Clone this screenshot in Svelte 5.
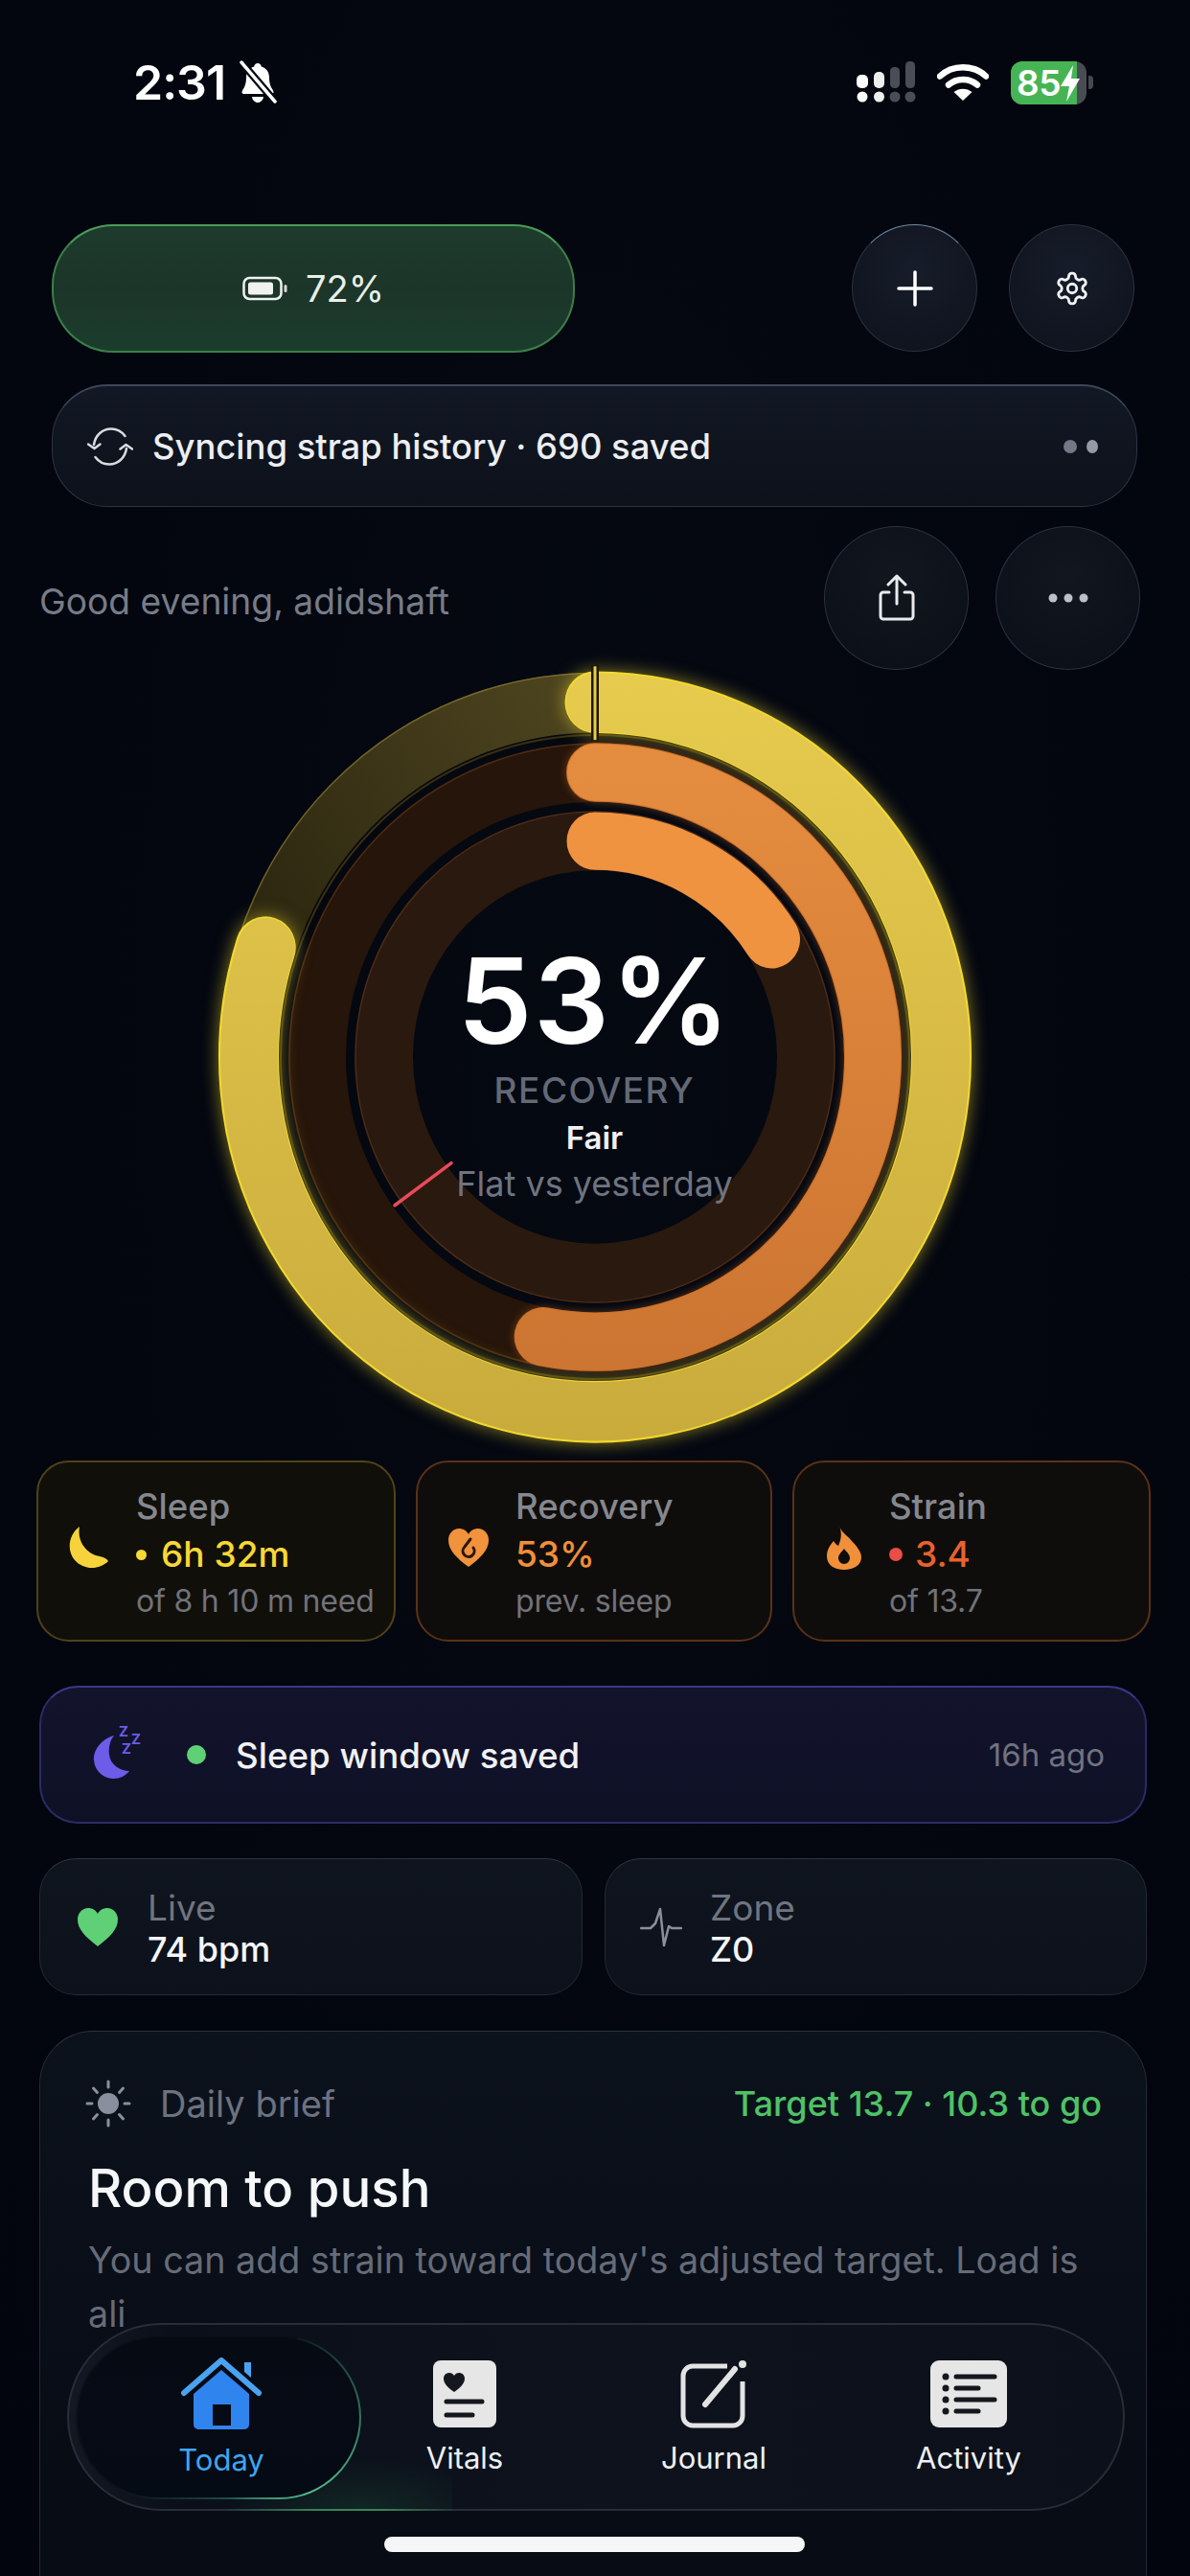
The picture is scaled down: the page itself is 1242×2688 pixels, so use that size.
<script>
  function arc(r, deg) {
    const a = (deg * Math.PI) / 180;
    const x = (r * Math.sin(a)).toFixed(2);
    const y = (-r * Math.cos(a)).toFixed(2);
    return `M 0 ${-r} A ${r} ${r} 0 ${deg > 180 ? 1 : 0} 1 ${x} ${y}`;
  }
  const cards = [
    { k: 'sleep', label: 'Sleep', value: '6h 32m', sub: 'of 8 h 10 m need', dot: true },
    { k: 'recovery', label: 'Recovery', value: '53%', sub: 'prev. sleep', dot: false },
    { k: 'strain', label: 'Strain', value: '3.4', sub: 'of 13.7', dot: true }
  ];
</script>

<div class="page">
  <header class="status">
    <div class="status-left">
      <span class="time">2:31</span>
      <svg class="bell" viewBox="0 0 40 46" width="42" height="46">
        <path d="M20 3c2 0 3.500 1.500 3.800 3.400C29.500 8 32 12.500 32 18c0 6 1.500 9.500 3.500 12.500 1.500 2.300 1.500 4.500-1.500 4.500H6c-3 0-3-2.200-1.500-4.500C6.500 27.500 8 24 8 18c0-5.500 2.500-10 8.200-11.600C16.500 4.500 18 3 20 3z" fill="#fff"/>
        <path d="M14 38h12c-.5 3.500-3 6-6 6s-5.500-2.500-6-6z" fill="#fff"/>
        <path d="M3 2 38 43" stroke="#03070f" stroke-width="8"/>
        <path d="M3 2 38 43" stroke="#fff" stroke-width="3.500" stroke-linecap="round"/>
      </svg>
    </div>
    <div class="status-right">
      <svg width="62" height="44" viewBox="0 0 62 44">
        <rect x="0" y="14" width="12" height="14" rx="5" fill="#fff"/>
        <rect x="18" y="11" width="11" height="17" rx="5" fill="#eee"/>
        <rect x="35" y="6" width="10" height="22" rx="4.500" fill="#4a4d55"/>
        <rect x="51" y="0" width="10" height="28" rx="4.500" fill="#4a4d55"/>
        <circle cx="6" cy="37" r="5.500" fill="#fff"/>
        <circle cx="23.500" cy="37" r="5.500" fill="#eee"/>
        <circle cx="40" cy="37" r="5.500" fill="#4a4d55"/>
        <circle cx="56" cy="37" r="5.500" fill="#4a4d55"/>
      </svg>
      <svg class="wifi" width="54" height="40" viewBox="0 0 54 40">
        <path d="M3 13.500C16 1 38 1 51 13.500" fill="none" stroke="#fff" stroke-width="6.500" stroke-linecap="round"/>
        <path d="M12 22.500c8.500-7.500 21.500-7.500 30 0" fill="none" stroke="#fff" stroke-width="6.500" stroke-linecap="round"/>
        <path d="M27 39 17.500 30c5.500-4.500 13.500-4.500 19 0z" fill="#fff"/>
      </svg>
      <div class="battery">
        <div class="batt-body">
          <span class="batt-fill"><span class="batt-num">85</span></span>
          <svg class="bolt" width="26" height="40" viewBox="0 0 26 40"><path d="M16 1 3 23h9L9 39l14-24h-9z" fill="#fff"/></svg>
        </div>
        <span class="batt-nub"></span>
      </div>
    </div>
  </header>

  <section class="top-row">
    <div class="battery-pill">
      <svg width="48" height="26" viewBox="0 0 48 26">
        <rect x="1.500" y="2" width="39" height="22" rx="6" fill="none" stroke="#f0f2f0" stroke-width="2.500"/>
        <rect x="6" y="6.500" width="26" height="13" rx="2.500" fill="#f0f2f0"/>
        <rect x="43.500" y="9" width="3" height="8" rx="1.500" fill="#d5d8d5"/>
      </svg>
      <span>72%</span>
    </div>
    <div class="top-actions">
      <button class="round r130 lit" aria-label="Add">
        <svg width="38" height="38" viewBox="0 0 38 38"><path d="M19 2v34M2 19h34" stroke="#fff" stroke-width="3.500" stroke-linecap="round"/></svg>
      </button>
      <button class="round r130" aria-label="Settings">
        <svg width="38" height="38" viewBox="0 0 24 24" fill="none" stroke="#f2f3f5" stroke-width="1.800" stroke-linejoin="round"><path d="M12.220 2h-.44a2 2 0 0 0-2 2v.18a2 2 0 0 1-1 1.730l-.43.25a2 2 0 0 1-2 0l-.15-.08a2 2 0 0 0-2.730.73l-.22.38a2 2 0 0 0 .73 2.730l.15.1a2 2 0 0 1 1 1.720v.51a2 2 0 0 1-1 1.740l-.15.09a2 2 0 0 0-.73 2.730l.22.38a2 2 0 0 0 2.730.73l.15-.08a2 2 0 0 1 2 0l.43.25a2 2 0 0 1 1 1.730V20a2 2 0 0 0 2 2h.44a2 2 0 0 0 2-2v-.18a2 2 0 0 1 1-1.730l.43-.25a2 2 0 0 1 2 0l.15.08a2 2 0 0 0 2.730-.73l.22-.39a2 2 0 0 0-.73-2.730l-.15-.08a2 2 0 0 1-1-1.740v-.5a2 2 0 0 1 1-1.740l.15-.09a2 2 0 0 0 .73-2.730l-.22-.38a2 2 0 0 0-2.730-.73l-.15.08a2 2 0 0 1-2 0l-.43-.25a2 2 0 0 1-1-1.730V4a2 2 0 0 0-2-2z"/><circle cx="12" cy="12" r="3"/></svg>
      </button>
    </div>
  </section>

  <section class="sync">
    <svg width="48" height="42" viewBox="0 0 48 42" fill="none" stroke="#d8dbe0" stroke-width="2.500" stroke-linecap="round" stroke-linejoin="round">
      <path d="M7 19C8.500 9 16 2.500 25 2.500c6 0 11 2.800 14.500 7.500"/>
      <path d="M41 23c-1.500 10-9 16.500-18 16.500-6 0-11-2.800-14.500-7.500"/>
      <path d="M1 18.500l6.500 4.500 6-4.500M47 23.500 40.500 19l-6 4.500"/>
    </svg>
    <span class="sync-text">Syncing strap history · 690 saved</span>
    <span class="sync-dots"><i></i><i class="b"></i></span>
  </section>

  <section class="greet">
    <span class="greet-text">Good evening, adidshaft</span>
    <div class="greet-actions">
      <button class="round r150" aria-label="Share">
        <svg width="40" height="50" viewBox="0 0 40 50" fill="none" stroke="#e9ebef" stroke-width="3" stroke-linecap="round" stroke-linejoin="round"><path d="M12 19H6a3 3 0 0 0-3 3v22a3 3 0 0 0 3 3h28a3 3 0 0 0 3-3V22a3 3 0 0 0-3-3h-6"/><path d="M20 31V3M11 11l9-9 9 9"/></svg>
      </button>
      <button class="round r150" aria-label="More">
        <svg width="42" height="10" viewBox="0 0 42 10"><circle cx="5" cy="5" r="4.500" fill="#bcc0c8"/><circle cx="21" cy="5" r="4.500" fill="#bcc0c8"/><circle cx="37" cy="5" r="4.500" fill="#bcc0c8"/></svg>
      </button>
    </div>
  </section>

  <section class="ring">
    <svg class="ring-svg" viewBox="-410 -410 820 820" preserveAspectRatio="none">
      <defs>
        <linearGradient id="gy" gradientUnits="userSpaceOnUse" x1="0" y1="-392" x2="0" y2="392"><stop offset="0" stop-color="#e6cb4e"/><stop offset="1" stop-color="#c9ab3c"/></linearGradient>
        <linearGradient id="go" gradientUnits="userSpaceOnUse" x1="0" y1="-320" x2="0" y2="320"><stop offset="0" stop-color="#e58d3f"/><stop offset="1" stop-color="#cc7532"/></linearGradient>
        <linearGradient id="ty" gradientUnits="userSpaceOnUse" x1="200" y1="-392" x2="-300" y2="-60"><stop offset="0" stop-color="#5d5226"/><stop offset="1" stop-color="#2c2710"/></linearGradient>
      </defs>
      <circle r="361" fill="none" stroke="url(#ty)" stroke-width="61"/>
      <circle r="391" fill="none" stroke="#8c7a30" stroke-width="1.500" opacity=".7"/>
      <circle r="328" fill="none" stroke="#3a300e" stroke-width="2"/>
      <circle r="290" fill="none" stroke="#26150a" stroke-width="60"/>
      <circle r="319" fill="none" stroke="#4d2a10" stroke-width="1.500"/>
      <circle r="220" fill="none" stroke="#2a190e" stroke-width="60"/>
      <circle r="250" fill="none" stroke="#4d2b16" stroke-width="1.500"/>
      <path class="glow-y" d={arc(361.500, 288)} fill="none" stroke="#f2d92f" stroke-width="63" stroke-linecap="round"/>
      <path d={arc(361, 288)} fill="none" stroke="url(#gy)" stroke-width="60" stroke-linecap="round"/>
      <path class="glow-o" d={arc(290, 190.800)} fill="none" stroke="#cf6f27" stroke-width="60" stroke-linecap="round"/>
      <path d={arc(290, 190.800)} fill="none" stroke="url(#go)" stroke-width="58" stroke-linecap="round"/>
      <path d={arc(220, 57)} fill="none" stroke="#f09341" stroke-width="59" stroke-linecap="round"/>
      <path d="M 0 -399 V -322" stroke="#1c1704" stroke-width="8"/>
      <path d="M 0 -398 V -323" stroke="#e8cc45" stroke-width="3"/>
      <path d="M -209 151 L -150 108" stroke="#ea4a5c" stroke-width="3.500" stroke-linecap="round"/>
    </svg>
    <div class="ring-text">
      <div class="pct">53%</div>
      <div class="rec">RECOVERY</div>
      <div class="fair">Fair</div>
      <div class="flat">Flat vs yesterday</div>
    </div>
  </section>

  <section class="cards">
    {#each cards as c}
      <article class="card {c.k}">
        <span class="card-icon">
          {#if c.k === 'sleep'}
            <svg width="44" height="46" viewBox="0 0 44 46"><path d="M13 1C2 9-1 25 8 36c9 10 25 11 35 1-2-3-5-4-9-5C22 30 10 18 13 1z" fill="#f6d33c"/></svg>
          {:else if c.k === 'recovery'}
            <svg width="44" height="42" viewBox="0 0 44 42"><path d="M22 41C10 32 1 24 1 13 1 6 6 1 12 1c4 0 8 2 10 6 2-4 6-6 10-6 6 0 11 5 11 12 0 11-9 19-21 28z" fill="#f1923c"/><path d="M24 12l-6 8a6 6 0 1 0 9 1" fill="none" stroke="#2a1708" stroke-width="3" stroke-linecap="round"/></svg>
          {:else}
            <svg width="38" height="48" viewBox="0 0 38 48"><path fill-rule="evenodd" d="M14 1c2 7 7 9 13 16 6 6 10 12 10 17 0 8-8 13-18 13S1 42 1 33c0-8 4-12 7-16 2 3 3 4 5 5C16 15 17 9 14 1zm5 24c-3 4-6 6-6 10 0 3 3 6 6 6s6-3 6-6c0-4-3-6-6-10z" fill="#f0903b"/></svg>
          {/if}
        </span>
        <div class="card-text">
          <div class="card-label">{c.label}</div>
          <div class="card-value">{#if c.dot}<i class="dot"></i>{/if}{c.value}</div>
          <div class="card-sub">{c.sub}</div>
        </div>
      </article>
    {/each}
  </section>

  <section class="banner">
    <svg class="zz" width="54" height="60" viewBox="0 -4 54 60">
      <path d="M22 10C8 14 0 26 1 36c1 12 11 19 21 19 6 0 12-3 16-8-10 0-20-7-21-17-1-8 1-15 5-20z" fill="#6c5ce7"/>
      <text x="27" y="11" class="z">Z</text><text x="40" y="19" class="z">Z</text><text x="30" y="29" class="z">Z</text>
    </svg>
    <i class="live-dot"></i>
    <span class="banner-text">Sleep window saved</span>
    <span class="banner-time">16h ago</span>
  </section>

  <section class="stats">
    <article class="stat live">
      <svg width="44" height="42" viewBox="0 0 44 42"><path d="M22 41C9 31 1 23 1 13 1 6 6 1 12 1c4 0 8 2 10 6 2-4 6-6 10-6 6 0 11 5 11 12 0 10-8 18-21 28z" fill="#5fd075"/></svg>
      <div><div class="stat-label">Live</div><div class="stat-value">74 bpm</div></div>
    </article>
    <article class="stat zone">
      <svg width="44" height="42" viewBox="0 0 44 42"><path d="M1 22h10l5-5 5-15 4 38 5-20 3 2h10" fill="none" stroke="#8a8f9a" stroke-width="2.500" stroke-linejoin="round" stroke-linecap="round"/></svg>
      <div><div class="stat-label">Zone</div><div class="stat-value">Z0</div></div>
    </article>
  </section>

  <section class="brief">
    <div class="brief-head">
      <span class="brief-title">
        <svg width="48" height="50" viewBox="0 0 48 50" stroke="#8a8f9e" stroke-width="3" stroke-linecap="round"><circle cx="24" cy="25" r="11" fill="#8a8f9e" stroke="none"/><path d="M24 2v6M24 42v6M2 25h5M41 25h5M8.500 9l4 4.500M35.500 36.500l4 4.500M8.500 41l4-4.500M35.500 13.500l4-4.500"/></svg>
        <span>Daily brief</span>
      </span>
      <span class="target">Target 13.7 · 10.3 to go</span>
    </div>
    <h2>Room to push</h2>
    <p>You can add strain toward today's adjusted target. Load is ali</p>
  </section>

  <nav class="tabs">
    <div class="tab active">
      <svg width="84" height="76" viewBox="0 0 84 76">
        <path d="M66 5h7v16l-7-6z" fill="#4aa3f0"/>
        <path d="M3 37 42 3l39 34" fill="none" stroke="#4aa3f0" stroke-width="6" stroke-linecap="round" stroke-linejoin="round"/>
        <path fill-rule="evenodd" d="M42 13 71 38v32a5 5 0 0 1-5 5H18a5 5 0 0 1-5-5V38zM33 49v22h19V49z" fill="#2f84ee"/>
      </svg>
      <span>Today</span>
    </div>
    <div class="tab">
      <svg width="68" height="72" viewBox="0 0 68 72">
        <rect x="1" y="1" width="66" height="70" rx="8" fill="#e6e6e6"/>
        <path d="M23 34c-7-5-11-9-11-14 0-4 3-6 6-6 2 0 4 1 5 3 1-2 3-3 5-3 3 0 6 2 6 6 0 5-4 9-11 14z" fill="#14171d"/>
        <path d="M15 44h37M15 58h27" stroke="#14171d" stroke-width="5" stroke-linecap="round"/>
      </svg>
      <span>Vitals</span>
    </div>
    <div class="tab">
      <svg width="70" height="72" viewBox="0 0 70 72" fill="none">
        <path d="M49 7H13A10 10 0 0 0 3 17v42a10 10 0 0 0 10 10h42a10 10 0 0 0 10-10V23" stroke="#e3e3e3" stroke-width="5"/>
        <path d="M26 47 57 10" stroke="#e3e3e3" stroke-width="6" stroke-linecap="round"/>
        <circle cx="65" cy="5" r="4" fill="#e3e3e3"/>
      </svg>
      <span>Journal</span>
    </div>
    <div class="tab">
      <svg width="82" height="72" viewBox="0 0 82 72">
        <rect x="1" y="1" width="80" height="70" rx="9" fill="#e6e6e6"/>
        <g fill="#14171d"><circle cx="17" cy="18" r="3.500"/><circle cx="17" cy="30" r="3.500"/><circle cx="17" cy="42" r="3.500"/><circle cx="17" cy="54" r="3.500"/></g>
        <path d="M28 18h40M28 30h23M28 42h40M28 54h23" stroke="#14171d" stroke-width="5" stroke-linecap="round"/>
      </svg>
      <span>Activity</span>
    </div>
  </nav>
  <div class="home"></div>
</div>

<style>
  :global(body) { margin: 0; background: #03070f; }
  * { box-sizing: border-box; }
  .page {
    position: relative;
    width: 1242px;
    height: 2688px;
    overflow: hidden;
    color: #fff;
    font-family: Inter, "Liberation Sans", sans-serif;
    background: radial-gradient(ellipse at 50% 40%, #050912 0%, #03060f 60%, #02050d 100%);
  }
  i { display: block; }
  button { padding: 0; font: inherit; color: inherit; cursor: pointer; }

  .status { height: 60px; margin-top: 56px; margin-bottom: 118px; padding: 0 101px 0 139px; display: flex; justify-content: space-between; align-items: center; }
  .status-left { display: flex; align-items: center; gap: 13px; }
  .time { font-size: 50px; font-weight: 600; line-height: 60px; letter-spacing: -1px; }
  .status-right { display: flex; align-items: center; gap: 22px; }
  .battery { display: flex; align-items: center; gap: 2px; margin-left: 1px; }
  .batt-body { position: relative; display: flex; width: 79px; height: 45px; border-radius: 12px; overflow: hidden; background: #494c52; }
  .batt-fill { width: 69px; background: #46b455; display: flex; align-items: center; padding-left: 6px; }
  .batt-num { font-size: 37px; font-weight: 600; line-height: 1; letter-spacing: -.5px; }
  .bolt { position: absolute; right: 4px; top: 3px; }
  .batt-nub { width: 5px; height: 14px; border-radius: 0 4px 4px 0; background: #45484e; }

  .top-row { height: 134px; margin: 0 58px 33px 54px; display: flex; justify-content: space-between; }
  .battery-pill {
    width: 546px; display: flex; align-items: center; justify-content: center; gap: 18px;
    border-radius: 64px; border: 2px solid #3a8048; border-top-color: #4a9c58;
    background: linear-gradient(180deg, #1d3b2c 0%, #1c3529 50%, #1b3d2d 100%);
    font-size: 38px; color: #e9efe9;
  }
  .top-actions { display: flex; gap: 33px; }
  .round {
    display: flex; align-items: center; justify-content: center; border-radius: 50%;
    border: 1.500px solid #2a3140;
    background: radial-gradient(circle at 50% 35%, #161c29, #0d121c);
  }
  .r130 { width: 131px; height: 133px; }
  .lit { border-top-color: #6f8ba3; }
  .r150 { width: 151px; height: 150px; background: radial-gradient(circle at 50% 35%, #11161f, #0a0e17); }

  .sync {
    height: 128px; margin: 0 55px 20px 54px; padding: 0 40px 0 36px;
    display: flex; align-items: center; gap: 20px;
    border-radius: 58px; border: 1.500px solid #2c3342; border-top: 2px solid #3d465a;
    background: linear-gradient(180deg, #121824, #0c111a);
  }
  .sync-text { font-size: 36.400px; font-weight: 500; color: #eceef2; flex: 1; }
  .sync-dots { display: flex; gap: 10px; }
  .sync-dots i { width: 14px; height: 14px; border-radius: 50%; background: #737888; }
  .sync-dots i.b { width: 12px; background: #9599a5; }

  .greet { height: 150px; margin: 0 52px 0 41px; display: flex; justify-content: space-between; align-items: center; }
  .greet-text { font-size: 37.200px; color: #777c88; margin-top: 6px; }
  .greet-actions { display: flex; gap: 28px; }

  .ring { height: 840px; margin-top: -16px; margin-bottom: -3px; margin-left: -1px; display: grid; place-items: center; }
  .ring > * { grid-area: 1 / 1; }
  .ring-svg { width: 820px; height: 840px; display: block; }
  .glow-y { filter: drop-shadow(0 0 9px rgba(242, 217, 47, .55)); }
  .glow-o { filter: drop-shadow(0 0 4px rgba(220, 120, 40, .4)); }
  .ring-text { text-align: center; display: flex; flex-direction: column; align-items: center; }
  .pct { font-size: 124px; font-weight: 600; line-height: 124px; letter-spacing: 1.500px; margin-top: 34px; }
  .rec { font-size: 37px; font-weight: 500; color: #646977; line-height: 44px; letter-spacing: 1.500px; margin-top: 10px; }
  .fair { font-size: 33px; font-weight: 600; color: #f0f0f2; line-height: 44px; margin-top: 5px; }
  .flat { font-size: 36px; color: #6f7480; line-height: 46px; margin-top: 3px; }

  .cards { height: 189px; margin: 4px 40px 46px 38px; display: grid; grid-template-columns: 375px 372px 374px; gap: 21px; }
  .card { display: flex; align-items: center; border-radius: 34px; border: 2px solid; background: #0f0d0b; }
  .sleep { border-color: #4f4318; padding-left: 30px; gap: 28px; background: #100f0a; }
  .recovery { border-color: #5a3216; padding-left: 31px; gap: 27px; }
  .strain { border-color: #5a3216; padding-left: 33px; gap: 28px; }
  .card-icon { display: flex; width: 44px; flex: none; margin-top: -7px; }
  .strain .card-icon { width: 38px; }
  .card-text { display: flex; flex-direction: column; gap: 8px; margin-top: 5px; }
  .card-label { font-size: 36.500px; font-weight: 500; color: #85888f; line-height: 42px; }
  .card-value { font-size: 37px; font-weight: 500; line-height: 42px; display: flex; align-items: center; gap: 15px; }
  .sleep .card-value { color: #f7d834; }
  .recovery .card-value { color: #ef8f3a; }
  .strain .card-value { color: #e8622d; gap: 13px; }
  .dot { width: 11px; height: 11px; border-radius: 50%; background: #f7d834; }
  .strain .dot { width: 14px; height: 14px; background: #ea4c46; }
  .card-sub { font-size: 32px; color: #70737a; line-height: 40px; white-space: nowrap; letter-spacing: -.2px; }

  .banner {
    height: 144px; margin: 0 45px 36px 41px; padding: 0 42px 0 54px;
    display: flex; align-items: center;
    border-radius: 40px; border: 2px solid #2d2a66; border-top-color: #3b3785;
    background: linear-gradient(180deg, #13132c, #0e1126);
  }
  .zz { flex: none; margin-top: -8px; }
  .z { font-family: Inter, sans-serif; font-size: 15px; font-weight: 700; fill: #6c5ce7; }
  .live-dot { width: 20px; height: 20px; border-radius: 50%; background: #5fd075; margin-left: 44px; margin-right: 31px; flex: none; }
  .banner-text { flex: 1; font-size: 36.700px; font-weight: 500; color: #f0f1f4; }
  .banner-time { font-size: 33px; color: #6f7380; }

  .stats { height: 143px; margin: 0 45px 37px 41px; display: grid; grid-template-columns: 567px 1fr; gap: 23px; }
  .stat {
    display: flex; align-items: center; gap: 30px; padding-left: 38px;
    border-radius: 38px; border: 1.500px solid #232a36; border-top-color: #2e3644;
    background: linear-gradient(180deg, #0f151f, #0c111b);
  }
  .stat > div { margin-top: 5px; }
  .stat.zone { padding-left: 36px; gap: 29px; }
  .stat-label { font-size: 37px; color: #70757f; line-height: 42px; }
  .stat-value { font-size: 36px; font-weight: 500; color: #f4f5f7; line-height: 44px; }

  .brief {
    height: 640px; margin: 0 45px 0 41px; padding: 50px 46px 0 50px;
    border-radius: 56px; border: 1.500px solid #232a36; border-top-color: #2b3240;
    background: linear-gradient(180deg, #0c121c, #070c15 70%);
  }
  .brief-head { display: flex; justify-content: space-between; align-items: center; height: 50px; }
  .brief-title { display: flex; align-items: center; gap: 30px; font-size: 38px; color: #6d7280; margin-left: -3px; }
  .target { font-size: 36px; font-weight: 500; color: #4fc266; }
  h2 { margin: 0; padding-top: 30px; font-size: 54.500px; font-weight: 500; line-height: 66px; color: #f6f7f9; }
  p { margin: 0; padding-top: 14px; width: 1070px; font-size: 37.700px; line-height: 56px; color: #666b78; }

  .tabs {
    position: absolute; left: 70px; top: 2424px; width: 1104px; height: 196px; border-radius: 98px;
    display: grid; grid-template-columns: 311px 204px 316px 216px; align-items: center;
    border: 2px solid #272d39;
    background: linear-gradient(90deg, #141822 0, #0a0f1a 10%, #0d121d 50%, #0b101a);
  }
  .tabs::after {
    content: ""; position: absolute; left: 160px; bottom: -2px; width: 240px; height: 56px;
    background:
      linear-gradient(90deg, transparent, rgba(70, 190, 105, .55) 40%, rgba(70, 190, 105, .55) 70%, transparent) bottom / 100% 2px no-repeat,
      radial-gradient(ellipse 60% 100% at 60% 100%, rgba(60, 190, 100, .13), transparent 100%);
    pointer-events: none;
  }
  .tab { display: flex; flex-direction: column; align-items: center; gap: 12px; font-size: 31px; color: #eef0f2; position: relative; z-index: 1; height: 171px; justify-content: center; }
  .tab svg { display: block; }
  .active {
    margin-left: 7px; width: 298px; color: #3ea6ef; border-radius: 86px; padding-left: 6px;
    border: 2px solid transparent;
    background:
      linear-gradient(180deg, #060a13, #050b15) padding-box,
      conic-gradient(from 45deg, #0e1c22 0deg, #55c08f 85deg, #1c4a48 130deg, #0c121b 190deg, #0a0f18 360deg) border-box;
  }
  .home { position: absolute; left: 401px; top: 2647px; width: 439px; height: 16px; border-radius: 8px; background: #f5f6f7; }
</style>
